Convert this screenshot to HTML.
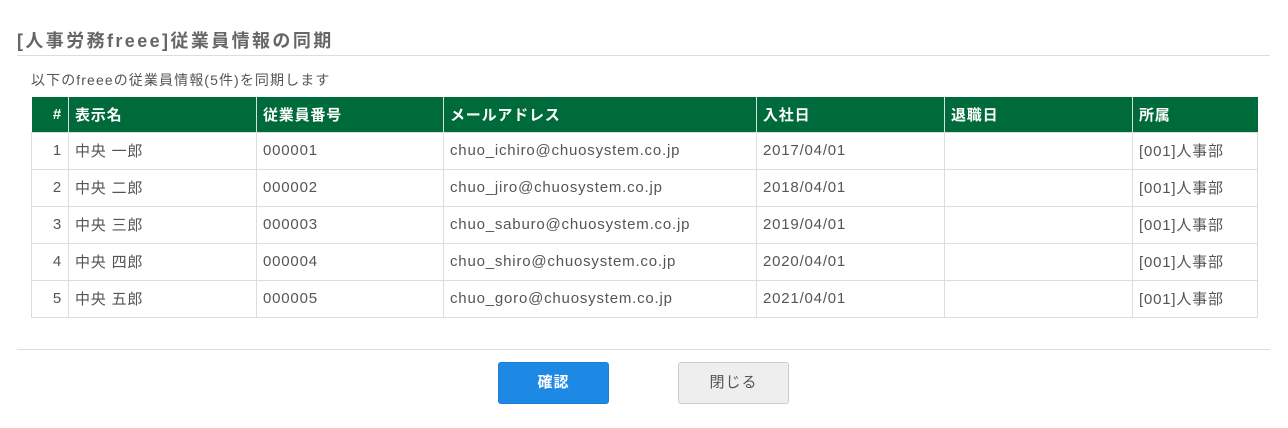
<!DOCTYPE html>
<html><head><meta charset="utf-8"><style>
body{margin:0;width:1288px;height:428px;background:#fff;font-family:"Liberation Sans","Noto Sans CJK JP",sans-serif;color:#555;position:relative;overflow:hidden}
.t{position:absolute;left:17px;top:27px;font-size:18px;font-weight:bold;color:#666;letter-spacing:2.4px}
.hr{position:absolute;left:17px;width:1253px;height:1px;background:#ddd}
.s{position:absolute;left:31px;top:70px;font-size:14px;color:#555;letter-spacing:1.1px}
table{position:absolute;left:31px;top:97px;border-collapse:collapse;font-size:15px;letter-spacing:0.8px;table-layout:fixed;width:1226px}
th{background:#006b3a;color:#fff;text-align:left;font-weight:bold;height:35px;padding:0 6px;border-left:1px solid #ddd;box-sizing:border-box}
td{height:37px;padding:0 6px;border:1px solid #ddd;box-sizing:border-box;color:#555}
th:first-child,td:first-child{text-align:right}
th:first-child{border-left:none}
.b{position:absolute;top:362px;width:111px;height:42px;border-radius:3px;box-sizing:border-box;font-size:15px;text-align:center;line-height:40px;letter-spacing:1px}
</style></head><body>
<div class="t">[人事労務freee]従業員情報の同期</div>
<div class="hr" style="top:55px"></div>
<div class="s">以下のfreeeの従業員情報(5件)を同期します</div>
<table>
<colgroup><col style="width:37px"><col style="width:188px"><col style="width:187px"><col style="width:313px"><col style="width:188px"><col style="width:188px"><col style="width:125px"></colgroup>
<tr><th>#</th><th>表示名</th><th>従業員番号</th><th>メールアドレス</th><th>入社日</th><th>退職日</th><th>所属</th></tr>
<tr><td>1</td><td>中央 一郎</td><td>000001</td><td>chuo_ichiro@chuosystem.co.jp</td><td>2017/04/01</td><td></td><td>[001]人事部</td></tr>
<tr><td>2</td><td>中央 二郎</td><td>000002</td><td>chuo_jiro@chuosystem.co.jp</td><td>2018/04/01</td><td></td><td>[001]人事部</td></tr>
<tr><td>3</td><td>中央 三郎</td><td>000003</td><td>chuo_saburo@chuosystem.co.jp</td><td>2019/04/01</td><td></td><td>[001]人事部</td></tr>
<tr><td>4</td><td>中央 四郎</td><td>000004</td><td>chuo_shiro@chuosystem.co.jp</td><td>2020/04/01</td><td></td><td>[001]人事部</td></tr>
<tr><td>5</td><td>中央 五郎</td><td>000005</td><td>chuo_goro@chuosystem.co.jp</td><td>2021/04/01</td><td></td><td>[001]人事部</td></tr>
</table>
<div class="hr" style="top:349px"></div>
<div class="b" style="left:498px;background:#1e88e5;color:#fff;border:1px solid #1a7fd6;font-weight:bold">確認</div>
<div class="b" style="left:678px;background:#eee;color:#555;border:1px solid #ccc">閉じる</div>
</body></html>
